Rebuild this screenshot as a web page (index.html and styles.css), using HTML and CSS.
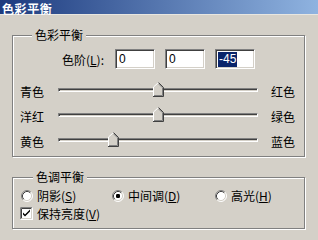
FILE: index.html
```html
<!DOCTYPE html>
<html lang="zh-CN">
<head>
<meta charset="utf-8">
<title>色彩平衡</title>
<link rel="stylesheet" href="styles.css">
</head>
<body>
<div class="titlebar">色彩平衡</div>
<div class="panel">
  <fieldset class="group group-balance">
    <legend>色彩平衡</legend>
    <div class="level-row">
      <span class="level-label">色阶(<u>L</u>):</span>
      <div class="field"><span class="val">0</span></div>
      <div class="field"><span class="val">0</span></div>
      <div class="field"><span class="val sel">-45</span></div>
    </div>
    <div class="slider-row">
      <span class="lab-left">青色</span>
      <div class="track"><div class="groove"></div>
        <svg class="thumb" style="left:50%" width="11" height="15" viewBox="0 0 11 15"><polygon points="0.5,5 5.5,0.5 10.5,5 10.5,14.5 0.5,14.5" fill="#d4d0c8"/><polyline points="0.5,14 0.5,5 5.5,0.5" fill="none" stroke="#fff"/><polyline points="5.5,0.5 10.5,5.5 10.5,14.5 0,14.5" fill="none" stroke="#404040"/><polyline points="5.5,1.8 9.5,5.8 9.5,13.5 1,13.5" fill="none" stroke="#808080"/></svg>
      </div>
      <span class="lab-right">红色</span>
    </div>
    <div class="slider-row">
      <span class="lab-left">洋红</span>
      <div class="track"><div class="groove"></div>
        <svg class="thumb" style="left:50%" width="11" height="15" viewBox="0 0 11 15"><polygon points="0.5,5 5.5,0.5 10.5,5 10.5,14.5 0.5,14.5" fill="#d4d0c8"/><polyline points="0.5,14 0.5,5 5.5,0.5" fill="none" stroke="#fff"/><polyline points="5.5,0.5 10.5,5.5 10.5,14.5 0,14.5" fill="none" stroke="#404040"/><polyline points="5.5,1.8 9.5,5.8 9.5,13.5 1,13.5" fill="none" stroke="#808080"/></svg>
      </div>
      <span class="lab-right">绿色</span>
    </div>
    <div class="slider-row">
      <span class="lab-left">黄色</span>
      <div class="track"><div class="groove"></div>
        <svg class="thumb" style="left:27.5%" width="11" height="15" viewBox="0 0 11 15"><polygon points="0.5,5 5.5,0.5 10.5,5 10.5,14.5 0.5,14.5" fill="#d4d0c8"/><polyline points="0.5,14 0.5,5 5.5,0.5" fill="none" stroke="#fff"/><polyline points="5.5,0.5 10.5,5.5 10.5,14.5 0,14.5" fill="none" stroke="#404040"/><polyline points="5.5,1.8 9.5,5.8 9.5,13.5 1,13.5" fill="none" stroke="#808080"/></svg>
      </div>
      <span class="lab-right">蓝色</span>
    </div>
  </fieldset>
  <fieldset class="group group-tone">
    <legend>色调平衡</legend>
    <div class="radio-row">
      <label class="opt opt1"><svg class="radio" width="12" height="12" viewBox="0 0 12 12"><circle cx="6" cy="6" r="5" fill="#fff"/><path d="M2.11 9.89 A5.5 5.5 0 0 1 9.89 2.11" fill="none" stroke="#808080"/><path d="M9.89 2.11 A5.5 5.5 0 0 1 2.11 9.89" fill="none" stroke="#fff"/><path d="M2.82 9.18 A4.5 4.5 0 0 1 9.18 2.82" fill="none" stroke="#404040"/><path d="M9.18 2.82 A4.5 4.5 0 0 1 2.82 9.18" fill="none" stroke="#d4d0c8"/></svg><span>阴影(<u>S</u>)</span></label>
      <label class="opt opt2"><svg class="radio" width="12" height="12" viewBox="0 0 12 12"><circle cx="6" cy="6" r="5" fill="#fff"/><path d="M2.11 9.89 A5.5 5.5 0 0 1 9.89 2.11" fill="none" stroke="#808080"/><path d="M9.89 2.11 A5.5 5.5 0 0 1 2.11 9.89" fill="none" stroke="#fff"/><path d="M2.82 9.18 A4.5 4.5 0 0 1 9.18 2.82" fill="none" stroke="#404040"/><path d="M9.18 2.82 A4.5 4.5 0 0 1 2.82 9.18" fill="none" stroke="#d4d0c8"/><rect x="4" y="4" width="4" height="4" rx="1.2" fill="#000"/></svg><span>中间调(<u>D</u>)</span></label>
      <label class="opt opt3"><svg class="radio" width="12" height="12" viewBox="0 0 12 12"><circle cx="6" cy="6" r="5" fill="#fff"/><path d="M2.11 9.89 A5.5 5.5 0 0 1 9.89 2.11" fill="none" stroke="#808080"/><path d="M9.89 2.11 A5.5 5.5 0 0 1 2.11 9.89" fill="none" stroke="#fff"/><path d="M2.82 9.18 A4.5 4.5 0 0 1 9.18 2.82" fill="none" stroke="#404040"/><path d="M9.18 2.82 A4.5 4.5 0 0 1 2.82 9.18" fill="none" stroke="#d4d0c8"/></svg><span>高光(<u>H</u>)</span></label>
    </div>
    <label class="check-row"><svg class="check" width="13" height="13" viewBox="0 0 13 13"><rect x="0" y="0" width="13" height="13" fill="#fff"/><path d="M0.5 12.5 V0.5 H12.5" fill="none" stroke="#808080"/><path d="M0.5 12.5 H12.5 V0.5" fill="none" stroke="#fff"/><path d="M1.5 11.5 V1.5 H11.5" fill="none" stroke="#404040"/><path d="M1.5 11.5 H11.5 V1.5" fill="none" stroke="#d4d0c8"/><path d="M3 5.5 L5 7.5 L10 2.5 V4.5 L5 9.5 L3 7.5 Z" fill="#000"/></svg><span>保持亮度(<u>V</u>)</span></label>
  </fieldset>
</div>
</body>
</html>
```
FILE: styles.css
```css
html, body {
  margin: 0;
  padding: 0;
}
body {
  width: 318px;
  height: 240px;
  overflow: hidden;
  background: #d4d0c8;
  font-family: "Noto Sans CJK SC", "Liberation Sans", sans-serif;
  font-size: 12px;
  color: #000;
}
u { text-decoration: underline; text-underline-offset: 1px; }
.titlebar {
  height: 15px;
  box-sizing: border-box;
  border-bottom: 1px solid #e8e6e0;
  background: linear-gradient(to right, #1c3a7e, #8fb3e0);
  color: #fff;
  font-weight: bold;
  font-size: 12px;
  line-height: 13px;
  padding-top: 2px;
  letter-spacing: 0.6px;
  padding-left: 2px;
}
.panel {
  display: flex;
  flex-direction: column;
  padding-left: 12px;
}
.group {
  width: 293px;
  box-sizing: border-box;
  margin: 0;
  border: 1px solid #808080;
  box-shadow: 1px 1px 0 #fff, inset 1px 1px 0 #fff;
  min-inline-size: 0;
}
.group legend {
  padding: 0 3px;
  margin-left: 12px;
  line-height: 14px;
  background: #d4d0c8;
}
.group-balance {
  margin-top: 13px;
  padding: 7px 0 4px 7px;
}
.level-row {
  display: flex;
  align-items: center;
  height: 20px;
  margin-bottom: 8px;
}
.level-label {
  margin-left: 42px;
  width: 53px;
  padding-top: 1px;
}
.field {
  width: 40px;
  height: 20px;
  box-sizing: border-box;
  margin-right: 10px;
  background: #fff;
  border: 1px solid;
  border-color: #808080 #fff #fff #808080;
  box-shadow: inset 1px 1px 0 #404040, inset -1px -1px 0 #d4d0c8;
  padding: 2px 0 0 2px;
  display: flex;
}
.val {
  font-family: "Liberation Sans", sans-serif;
  font-size: 12px;
  line-height: 15px;
  height: 15px;
  padding: 0 1px;
}
.val.sel {
  background: #0a246a;
  color: #fff;
}
.slider-row {
  display: flex;
  align-items: center;
  height: 25px;
}
.lab-left {
  width: 38px;
  padding-top: 3px;
}
.lab-right {
  margin-left: 13px;
  padding-top: 3px;
}
.track {
  position: relative;
  width: 200px;
  height: 25px;
  display: flex;
  align-items: center;
}
.groove {
  width: 200px;
  height: 4px;
  box-sizing: border-box;
  border: 1px solid;
  border-color: #808080 #fff #fff #808080;
  box-shadow: inset 1px 1px 0 #404040;
  background: #d4d0c8;
}
.thumb {
  position: absolute;
  top: 5px;
  margin-left: -5px;
  display: block;
}
.group-tone {
  margin-top: 13px;
  padding: 3px 0 7px 8px;
}
.radio-row {
  display: grid;
  grid-template-columns: 91px 103px auto;
  height: 14px;
  align-items: center;
  margin-bottom: 5px;
}
.opt {
  display: flex;
  align-items: center;
  gap: 4px;
}
.radio { display: block; flex: none; }
.check-row {
  display: flex;
  align-items: center;
  gap: 4px;
  height: 15px;
}
.check { display: block; flex: none; margin-left: -1px; }
```
